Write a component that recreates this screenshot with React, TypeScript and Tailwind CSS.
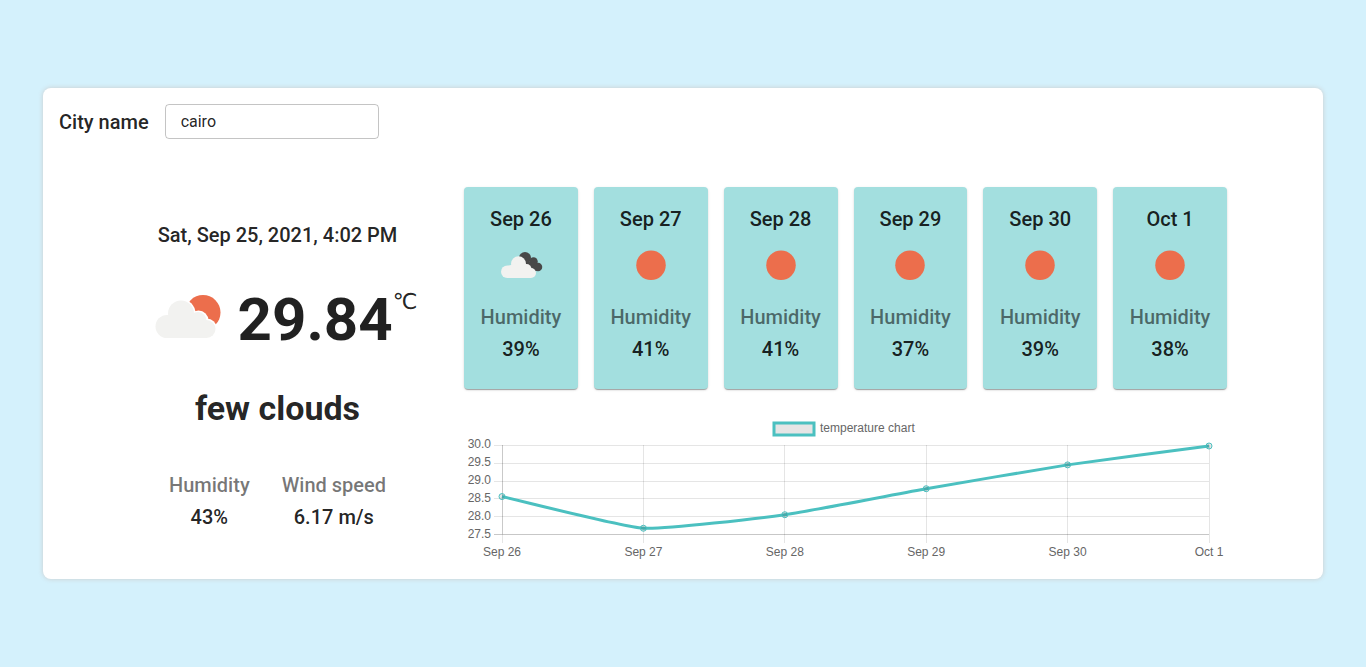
import { useState } from "react";

type Day = { date: string; icon: "clouds" | "sun"; humidity: number; temp: number };

const DAYS: Day[] = [
  { date: "Sep 26", icon: "clouds", humidity: 39, temp: 28.56 },
  { date: "Sep 27", icon: "sun", humidity: 41, temp: 27.67 },
  { date: "Sep 28", icon: "sun", humidity: 41, temp: 28.05 },
  { date: "Sep 29", icon: "sun", humidity: 37, temp: 28.78 },
  { date: "Sep 30", icon: "sun", humidity: 39, temp: 29.45 },
  { date: "Oct 1", icon: "sun", humidity: 38, temp: 29.98 },
];

function FewClouds() {
  return (
    <svg className="size-[100px] shrink-0" viewBox="0 0 100 100" aria-hidden="true">
      <circle cx="65" cy="42.5" r="17.5" fill="#ec6e4c" />
      <g fill="#fff">
        <circle cx="43" cy="43.5" r="14.5" />
        <circle cx="60.5" cy="50.5" r="10" />
        <circle cx="68.5" cy="59" r="10.5" />
      </g>
      <g fill="#f2f2f0">
        <circle cx="29" cy="56.5" r="11.5" />
        <circle cx="43" cy="43.5" r="13" />
        <circle cx="60" cy="50.5" r="8.5" />
        <circle cx="68.5" cy="59" r="9" />
        <path d="M29 68V50L42 42L60 46L68.5 56V68z" />
      </g>
    </svg>
  );
}

function BrokenClouds() {
  return (
    <svg className="size-[50px]" viewBox="0 0 100 100" aria-hidden="true">
      <g fill="#484848">
        <circle cx="58" cy="36" r="12" />
        <circle cx="75" cy="43" r="8.5" />
        <circle cx="84" cy="54" r="8.5" />
        <path d="M56 44L76 44L82 62L70 62z" />
      </g>
      <g fill="#f2f2f0">
        <circle cx="22.5" cy="63.5" r="12.5" />
        <circle cx="45" cy="47.5" r="15" />
        <circle cx="61" cy="58" r="10" />
        <circle cx="70" cy="66" r="10" />
        <path d="M22.5 76V52L45 46L61 50L70 60V76z" />
      </g>
    </svg>
  );
}

function Sun() {
  return (
    <svg className="size-[50px]" viewBox="0 0 100 100" aria-hidden="true">
      <circle cx="50" cy="50.5" r="29.5" fill="#ec6e4c" />
    </svg>
  );
}

function Stat({ label, value }: { label: string; value: string }) {
  return (
    <div className="text-center text-xl leading-8 font-medium">
      <p className="text-black/54">{label}</p>
      <p>{value}</p>
    </div>
  );
}

type Point = { x: number; y: number };

// Smooths the line through the points with a light tension.
function spline(points: Point[], tension: number) {
  const handles = points.map((p, i) => {
    const prev = points[i - 1] ?? p;
    const next = points[i + 1] ?? p;
    const before = Math.hypot(p.x - prev.x, p.y - prev.y);
    const after = Math.hypot(next.x - p.x, next.y - p.y);
    const a = (tension * before) / (before + after);
    const b = (tension * after) / (before + after);
    const dx = next.x - prev.x;
    const dy = next.y - prev.y;
    return { inX: p.x - a * dx, inY: p.y - a * dy, outX: p.x + b * dx, outY: p.y + b * dy };
  });
  return points
    .map((p, i) =>
      i === 0
        ? `M${p.x} ${p.y}`
        : `C${handles[i - 1].outX} ${handles[i - 1].outY} ${handles[i].inX} ${handles[i].inY} ${p.x} ${p.y}`,
    )
    .join("");
}

function TemperatureChart() {
  const left = 38;
  const right = 745;
  const top = 40;
  const bottom = 129;
  const ticks = [30, 29.5, 29, 28.5, 28, 27.5];
  const yOf = (t: number) => top + ((30 - t) / 2.5) * (bottom - top);
  const points = DAYS.map((d, i) => ({
    x: left + ((right - left) * i) / (DAYS.length - 1),
    y: yOf(d.temp) + 0.3,
  }));

  return (
    <svg
      className="mt-4 block w-full overflow-visible font-['Liberation_Sans',Arial,sans-serif] text-[12px]"
      viewBox="0 0 763 158"
      role="img"
      aria-label="temperature chart"
    >
      <rect x="310" y="18" width="40" height="12" fill="#e5e5e5" stroke="#4bc0c0" strokeWidth="3" />
      <text x="356" y="27" fill="#666">
        temperature chart
      </text>
      {ticks.map((t, i) => {
        const y = Math.round(yOf(t)) + 0.5;
        return (
          <g key={t}>
            <line x1={left - 8} x2={right} y1={y} y2={y} stroke="#000" strokeOpacity={t === 27.5 ? 0.22 : 0.1} />
            <text x="27" y={43 + i * 18} textAnchor="end" fill="#666">
              {t.toFixed(1)}
            </text>
          </g>
        );
      })}
      {points.map((p, i) => {
        const x = Math.floor(p.x) + 0.5;
        return (
          <g key={DAYS[i].date}>
            <line x1={x} x2={x} y1={top} y2={bottom + 9} stroke="#000" strokeOpacity="0.1" />
            {i === 0 && <line x1={x} x2={x} y1={top} y2={bottom} stroke="#000" strokeOpacity="0.12" />}
            <text x={p.x} y="151" textAnchor="middle" fill="#666">
              {DAYS[i].date}
            </text>
          </g>
        );
      })}
      <path d={spline(points, 0.15)} fill="none" stroke="#4bc0c0" strokeWidth="3" />
      {points.map((p) => (
        <circle key={p.x} cx={p.x} cy={p.y} r="3" fill="#000" fillOpacity="0.1" stroke="#4bc0c0" />
      ))}
    </svg>
  );
}

export default function App() {
  const [city, setCity] = useState("cairo");

  return (
    <main className="flex min-h-screen items-center justify-center bg-[#d4f1fc] font-[Roboto,sans-serif] text-black/87">
      <section className="w-full max-w-[1280px] rounded-lg bg-white p-4 shadow-[0_0_5px_#cccccc]">
        <div className="flex items-center gap-4">
          <label htmlFor="city" className="text-xl leading-8 font-medium">
            City name
          </label>
          <input
            id="city"
            value={city}
            onChange={(e) => setCity(e.target.value)}
            className="h-[35px] w-[214px] rounded border border-black/23 px-[15px] text-base outline-none focus:border-[#4bc0c0]"
          />
        </div>

        <div className="mt-12 grid grid-cols-[341fr_763fr] gap-4 pr-20 pl-12">
          <div className="flex flex-col items-center justify-center pt-px">
            <p className="text-xl leading-8 font-medium">Sat, Sep 25, 2021, 4:02 PM</p>
            <div className="mt-[19px] mb-[17px] flex items-center">
              <FewClouds />
              <div className="flex items-start">
                <p className="text-6xl leading-[72px] font-bold">29.84</p>
                <span className="font-['DejaVu_Sans',sans-serif] text-[22px] leading-9">℃</span>
              </div>
            </div>
            <h1 className="text-[34px] leading-[42px] font-bold">few clouds</h1>
            <div className="mt-10 flex gap-8">
              <Stat label="Humidity" value="43%" />
              <Stat label="Wind speed" value="6.17 m/s" />
            </div>
          </div>

          <div className="min-w-0">
            <ul className="grid grid-cols-6 gap-4">
              {DAYS.map((day) => (
                <li
                  key={day.date}
                  className="flex flex-col items-center rounded bg-[#a3dfdf] pt-4 pb-6 shadow-[0_2px_1px_-1px_rgba(0,0,0,0.2),0_1px_1px_rgba(0,0,0,0.14),0_1px_3px_rgba(0,0,0,0.12)]"
                >
                  <h2 className="text-xl leading-8 font-medium">{day.date}</h2>
                  <div className="mt-[5px] mb-[11px]">{day.icon === "sun" ? <Sun /> : <BrokenClouds />}</div>
                  <Stat label="Humidity" value={`${day.humidity}%`} />
                </li>
              ))}
            </ul>
            <TemperatureChart />
          </div>
        </div>
      </section>
    </main>
  );
}
